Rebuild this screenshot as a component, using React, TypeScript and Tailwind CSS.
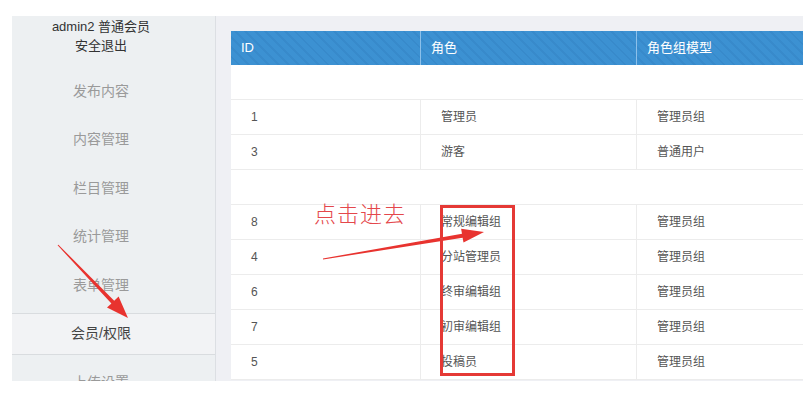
import React from "react";

type Role = { id: string; name: string; group: string } | null;

// null entries are the blank spacer rows in the list
const roles: Role[] = [
  null,
  { id: "1", name: "管理员", group: "管理员组" },
  { id: "3", name: "游客", group: "普通用户" },
  null,
  { id: "8", name: "常规编辑组", group: "管理员组" },
  { id: "4", name: "分站管理员", group: "管理员组" },
  { id: "6", name: "终审编辑组", group: "管理员组" },
  { id: "7", name: "初审编辑组", group: "管理员组" },
  { id: "5", name: "投稿员", group: "管理员组" },
];

const menu = ["发布内容", "内容管理", "栏目管理", "统计管理", "表单管理", "会员/权限", "上传设置"];

const font = "font-['Liberation_Sans','Noto_Sans_CJK_SC',sans-serif]";

function Sidebar() {
  return (
    <aside className="w-[204px] shrink-0 bg-[#edf0f2] border-r border-[#dcdfe3] pr-[25px] flex flex-col">
      {/* user box */}
      <div className="h-[51px] shrink-0 flex flex-col items-center text-[13px] leading-[19px] text-[#333] pt-[1px]">
        <span>admin2 普通会员</span>
        <span>安全退出</span>
      </div>

      {menu.map((item) => {
        const active = item === "会员/权限";
        return (
          <div
            key={item}
            className={`h-[42.5px] my-[3px] flex items-center justify-center text-[14px] shrink-0 ${
              active
                ? "bg-[#f2f3f5] text-[#444] border-y border-[#d9dcdf] -mr-[25px] pr-[25px]"
                : "text-[#9a9a9a]"
            }`}
          >
            {item}
          </div>
        );
      })}
    </aside>
  );
}

function RoleTable() {
  const cols = "grid grid-cols-[190px_216px_220px]";
  return (
    <div className="w-[626px] bg-white">
      <div
        className={`${cols} h-[34px] items-center text-white text-[13px] bg-[#3b8fd0] bg-[repeating-linear-gradient(45deg,#3c91d2_0px,#3c91d2_5px,#388acb_5px,#388acb_7px)]`}
      >
        <div className="h-full flex items-center pl-[10px] border-r border-[#8cc0ea]">ID</div>
        <div className="h-full flex items-center pl-[10px] border-r border-[#8cc0ea]">角色</div>
        <div className="h-full flex items-center pl-[10px]">角色组模型</div>
      </div>

      {roles.map((r, i) =>
        r ? (
          <div key={i} className={`${cols} h-[35px] text-[12px] text-[#555] border-b border-[#ececec]`}>
            <div className="flex items-center pl-[20px] border-r border-[#ececec]">{r.id}</div>
            <div className="flex items-center pl-[20px] border-r border-[#ececec]">{r.name}</div>
            <div className="flex items-center pl-[20px]">{r.group}</div>
          </div>
        ) : (
          <div key={i} className="h-[35px] border-b border-[#ececec]" />
        )
      )}
    </div>
  );
}

function Annotations() {
  return (
    <svg className="absolute inset-0 pointer-events-none" width="803" height="405" viewBox="0 0 803 405">
      <polygon
        fill="#e8332f"
        points="58.4,244.7 114.2,300.7 118.6,296.6 128,318 107,307.6 111.4,303.5 57.6,245.3"
      />
      <polygon
        fill="#e8332f"
        points="322.9,258.5 462,233.7 461.1,228.8 484,232 463.5,242.6 462.6,237.7 323.1,259.5"
      />
      <rect x="441.5" y="206.5" width="72" height="168" fill="none" stroke="#e53935" strokeWidth="3" />
    </svg>
  );
}

export default function App() {
  return (
    <div className={`relative w-[803px] h-[405px] bg-white overflow-hidden pt-[16px] ${font}`}>
      <div className="flex h-[365px] overflow-hidden">
        <div className="w-[12px] shrink-0 bg-white" />
        <Sidebar />
        <main className="flex-1 bg-[#eff0f4] pt-[15px] pl-[15px] overflow-hidden">
          <RoleTable />
        </main>
      </div>

      <Annotations />
      <span className="absolute left-[314px] top-[198px] text-[22px] leading-[28px] text-[#e4474b] font-['Noto_Sans_CJK_SC',serif] font-light tracking-[1px]">
        点击进去
      </span>
    </div>
  );
}
